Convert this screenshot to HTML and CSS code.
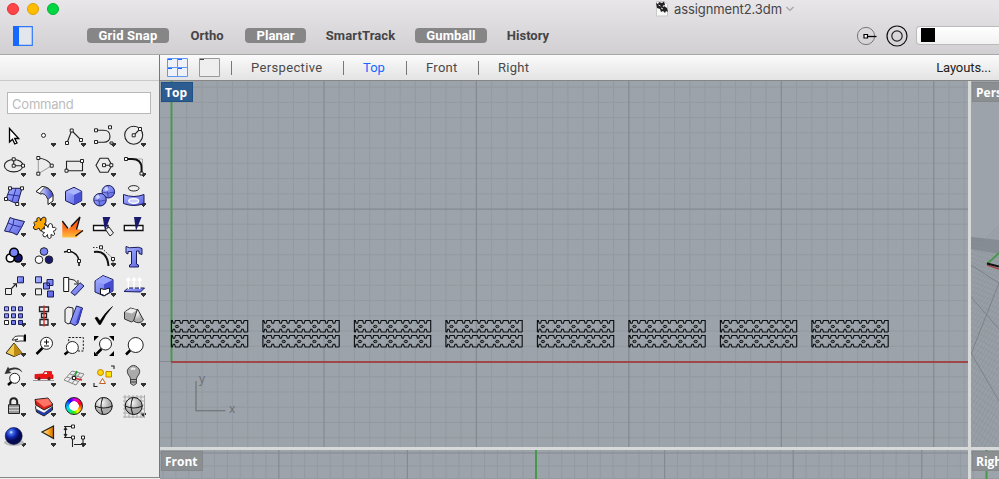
FILE: index.html
```html
<!DOCTYPE html>
<html lang="en">
<head>
<meta charset="utf-8">
<title>assignment2.3dm</title>
<link rel="stylesheet" href="styles.css">
</head>
<body>
<div class="window">
  <header class="titlebar">
    <div class="title-row">
      <div class="lights"><i class="light red"></i><i class="light yellow"></i><i class="light green"></i></div>
      <div class="doc-title">
        <svg width="14" height="18" viewBox="0 0 14 18"><path d="M1.500 1.500h8l3 3v11.500h-11z" fill="#f8f8f8" stroke="#c9c9c9"/><path d="M1 3l2 1 1-2 3 1 2-1.500 1 3-1 1.500 3 2 1 4-2-1-1 2-2-2-2 1-1-3-3-1z" fill="#222"/><path d="M3.500 5l2 1M6 8l2 1M9 5l-1 2" stroke="#ddd"/></svg>
        <span class="doc-name">assignment2.3dm</span>
        <svg width="10" height="8" viewBox="0 0 10 8"><path d="M1.500 2L5 5.500 8.500 2" fill="none" stroke="#a5a3a6" stroke-width="1.2"/></svg>
      </div>
    </div>
    <div class="tool-row">
      <svg class="panel-toggle" width="20" height="20" viewBox="0 0 20 20"><path d="M.7.7h18.6v18.600H.7z" fill="#e4e6ee" stroke="#2f78f6" stroke-width="1.200"/><path d="M0 0h6v20H0z" fill="#1668ff"/></svg>
      <nav class="toggles">
        <span class="toggle on snap">Grid Snap</span><span class="toggle ortho">Ortho</span><span class="toggle on planar">Planar</span><span class="toggle smart">SmartTrack</span><span class="toggle on gumball">Gumball</span><span class="toggle history">History</span>
      </nav>
      <div class="right-tools">
        <svg width="22" height="22" viewBox="0 0 22 22"><circle cx="10" cy="11" r="8.600" fill="none" stroke="#777" stroke-width="1"/><path d="M12 11.500h8.500" stroke="#000" stroke-width="1.300"/><path d="M8 9.500h3.500v3.500H8z" fill="#fff" stroke="#000" stroke-width="1.200"/></svg>
        <svg width="22" height="22" viewBox="0 0 22 22"><circle cx="11" cy="11" r="10" fill="none" stroke="#111" stroke-width="1.200"/><circle cx="11" cy="11" r="5.200" fill="none" stroke="#222" stroke-width="1.200"/></svg>
        <div class="layer-select"><i class="swatch"></i></div>
      </div>
    </div>
  </header>
  <main class="workspace">
    <aside class="sidebar">
      <div class="side-strip"></div>
      <div class="command">Command</div>
      <div class="tools">
<svg class="t m"><path d="M9.500 7.500v13.500l3-2.700 2.300 4.700 2.200-1-2.300-4.500h4z" fill="#fff" stroke="#000" stroke-width="1.300"/></svg>
<svg class="t d"><circle cx="13.500" cy="14.400" r="2" fill="#fff" stroke="#222"/></svg>
<svg class="t d"><path d="M7 22l4.700-12.500L21 19" class="l"/><path class="s" d="M5.500 20.500h3v3h-3zM10.200 8h3v3h-3zM19.500 17.500h3v3h-3z"/></svg>
<svg class="t d"><path d="M6 9.300h7.500q6.500 0 6.500 6t-6.500 6H6" class="l"/><path class="s" d="M4.500 7.800h3v3h-3zM4.500 19.500h3v3h-3zM18.500 4.800h3v3h-3zM20 21h3v2h-3z"/></svg>
<svg class="t d"><circle cx="13.700" cy="14.300" r="9" class="l"/><path class="l" d="M13.700 14.300L20 8"/><path class="s" d="M12.200 12.800h3v3h-3zM18.500 6.500h3v3h-3z"/></svg>

<svg class="t d"><ellipse cx="13.700" cy="14.700" rx="9.300" ry="6.200" class="l"/><path class="l" d="M13.700 8.300v6.400H23"/><path class="s" d="M12.200 6.800h3v3h-3zM12.200 13.200h3v3h-3zM21.500 13.200h3v3h-3z"/></svg>
<svg class="t d"><path d="M8.300 7v15.700l13.400-8" fill="none" stroke="#999"/><path class="l" d="M8.300 7q10 1 13.400 7.700"/><path class="s" d="M6.800 5.500h3v3h-3zM20.200 13.200h3v3h-3zM6.800 21.200h3v3h-3z"/></svg>
<svg class="t d"><path class="l" d="M6.500 10.300h16v9.400h-16z"/><path class="s" d="M5 18.200h3v3H5zM20.500 8.500h3v3h-3z"/></svg>
<svg class="t d"><path class="l" d="M6 14.300l4-7h8l4 7-4 7h-8zM14 14.300h8"/><path class="s" d="M12.500 12.700h3v3h-3zM19.800 12.700h3v3h-3z"/></svg>
<svg class="t d"><path d="M6 8h16.500v15" fill="none" stroke="#aaa"/><path d="M8 8h4q9.500 0 9.500 9v6.500" fill="none" stroke="#111" stroke-width="1.800"/><path class="s" d="M4.500 6.500h3v3h-3zM20 21h3v3h-3z"/></svg>

<svg class="t d"><path class="b" d="M10 7.300h12L17.500 23 6 18z"/><path d="M16 7.500L12 20.500M8 13.500l11.500 1.500" stroke="#2b2f9e" fill="none"/><path class="s" d="M8.500 5.800h3v3h-3zM20.500 5.800h3v3h-3zM4.500 16.500h3v3h-3zM15.700 21.500h3v3h-3z"/></svg>
<svg class="t d"><path d="M6 10.500L12 5.500q8 0 11 8v6.500l-5 3.500v-5Q15 11 10.500 13z" fill="#fff" stroke="#111"/><path d="M9.500 12.500l5-6q6 1 8.500 8l-5 4Q15 11 9.500 12.500z" fill="url(#blue)" stroke="#222" stroke-width=".6"/></svg>
<svg class="t d"><path d="M5.500 10.300L14 6.300l7.700 4v9.400l-7.700 4-8.500-4z" class="b"/><path d="M6.500 10.500L14 7l7 3.500-7 3.200z" fill="#abb5ff"/><path d="M14 14v9.500l7.500-4V10.500z" fill="#4a52d4"/></svg>
<svg class="t d"><circle cx="18.300" cy="10.700" r="6.300" class="b"/><circle cx="10" cy="18.700" r="6.300" class="b"/><path d="M4 19q6 2.500 12 0M10 12.500q-2.500 6 0 12.500M12 11q6 2.500 12.500 0M18.500 4.500q-2.500 6 0 12.500" stroke="#3a409c" stroke-width=".8" fill="none"/><circle cx="8" cy="16" r="2" fill="#cdd4ff"/><circle cx="16.500" cy="8" r="2" fill="#cdd4ff"/></svg>
<svg class="t d"><ellipse cx="13.700" cy="7.300" rx="5.300" ry="2.700" fill="#eee" stroke="#222"/><path d="M3.500 13.500q10.500 4 20.500 0v9q-10 4-20.500 0z" class="b"/><ellipse cx="13.700" cy="20" rx="5" ry="2.300" fill="#c9d1ff" stroke="#fff" stroke-width="1.300"/></svg>

<svg class="t d"><path class="b" d="M10 6.500l4 1.500 10.500 2.500-3 6-4.500 7.500-5-2.500L4.500 20l3-7z"/><path d="M8 12l5 2 8 2M14 8l-1 6-4 7" stroke="#2b2f9e" fill="none"/></svg>
<svg class="t"><path d="M4 11.500q1-2 3-1-1-4 1.500-4t2 3.500q1-4 3.500-4t2 4-2 3q3 0 3 2t-4 2q1 2-1 3t-3-3q-3 3-5 1t1-4q-1-1-1-2.500z" fill="#ffa500" stroke="#222"/><path d="M11.500 19q1-2 3-1-1-3 1-3.500t2.500 2q0-4 2.500-4t2 4q3-1 3.500 1t-3 3q2 1 1.500 3t-3.500 0q1 4-1.500 4t-2-4q-2 4-4 2t1-4q-3 0-3-2.500z" fill="#fff" stroke="#222"/></svg>
<svg class="t"><path d="M2.300 26.500V10L8 18.500 20 6l-3.500 12L23 19.500 16.500 26.500z" fill="url(#fire)"/><path d="M2.300 10L8 17.500M11 15.500L20 6l-3.500 12.500M23 19.500L15.500 25" fill="none" stroke="#111" stroke-width="1.300"/></svg>
<svg class="t"><path d="M3.500 14.500H18v5H3.500z" fill="#fff" stroke="#111" stroke-width="1.300"/><path d="M15.500 18.500l3.500-2.500 4.500 6-3.500 3z" fill="#eee" stroke="#222"/><path d="M12.700 6h7.600L15 20z" fill="#191970"/></svg>
<svg class="t"><path d="M4.300 14.500H23v5H4.300z" fill="#fff" stroke="#111" stroke-width="1.300"/><path d="M14 6h7.500L16 20z" fill="#191970"/></svg>

<svg class="t d"><g stroke="#000" stroke-width="1.600"><circle cx="18" cy="17" r="4" fill="#15156e"/><circle cx="10.300" cy="17" r="4" fill="#fff"/><circle cx="14" cy="11.500" r="4.300" fill="#7783f6"/></g></svg>
<svg class="t"><g stroke="#222"><circle cx="14" cy="10.500" r="3.800" fill="#7783f6"/><circle cx="19" cy="18.700" r="3.800" fill="#191970"/><circle cx="9" cy="18.700" r="3.800" fill="#fff"/></g></svg>
<svg class="t"><path d="M4 11l5-1q9 2 10 10v5" fill="none" stroke="#111" stroke-width="1.600"/><path class="s" d="M7.500 8.500h3v3h-3zM17.500 18.500h3v3h-3z"/></svg>
<svg class="t d"><path d="M4 11q13-2 14.500 14" fill="none" stroke="#111" stroke-width="2"/><path d="M3 6.500h8l12 11v6" fill="none" stroke="#333" stroke-dasharray="1.500 1.500"/><path class="s" d="M9.500 4.800h3v3h-3zM21.500 16.500h3v3h-3z"/></svg>
<svg class="t"><path d="M6 5.500q3 2 8 1t8 1v6l-3-1v-2.500h-2.500V23l2 1v2h-9v-2l2-1V10.500H8V13l-2-1z" class="b"/></svg>

<svg class="t d"><path d="M5.500 17.500h6v6h-6z" fill="#eee" stroke="#222"/><path d="M17.500 5.800h6v6h-6z" class="b"/><path d="M11.500 17.500l5-5m-3.500.3h3.500v3.500" class="l"/></svg>
<svg class="t"><path d="M5.500 5.800h6v6h-6zM17 8.500h6v6h-6zM13.500 12h6v6h-6zM17.500 20h6v6h-6z" class="b"/><path d="M5.500 17.800h6v6h-6z" fill="#eee" stroke="#222"/></svg>
<svg class="t"><path d="M3.700 6.500h5v14h-5z" fill="#fff" stroke="#111"/><path d="M9 8q6 0 8.500 4M18 9v4h-4" fill="none" stroke="#222"/><path class="b" d="M20 11.700l4 3.300-9 9.500-4-3z"/></svg>
<svg class="t d"><path d="M5 10l8-5.500 10 4V20l-9 5-9-4z" class="b"/><path d="M5.500 10l7.500-5 9.500 4-8.500 4z" fill="#9aa5ff"/><path d="M14 13.500l8.500-4.500v11L14 24.500z" fill="#454dd2"/><path d="M10.500 17.500l4 1 5-1.500v4.500l-5 3-4-1.500z" fill="#fff" stroke="#111"/></svg>
<svg class="t d"><path class="b" d="M4 20.500l4-3.500h16.500l-4 4z"/><path d="M8.300 18V8M14 18V8M19.700 18V8M6.300 9.500l2-2.500 2 2.500M12 9.500L14 7l2 2.500M17.700 9.500l2-2.500 2 2.500" fill="none" stroke="#fff" stroke-width="1.400"/></svg>

<svg class="t d"><g class="b"><path d="M4.500 5.800h4v4h-4zM11.500 5.800h4v4h-4zM18.500 5.800h4v4h-4zM4.500 12.800h4v4h-4zM11.500 12.800h4v4h-4zM18.500 12.800h4v4h-4zM11.500 19.500h4v4h-4zM18.500 19.500h4v4h-4z"/></g><path d="M4.500 19.500h4v4h-4z" fill="#fff" stroke="#222"/></svg>
<svg class="t d"><path d="M9.500 6h9v4.500h-9zM11.500 12.500h5v4h-5zM10 18.500h8V24h-8z" fill="#eee" stroke="#222" stroke-width="1.300"/><path d="M14 4.500v21" stroke="#e02020" stroke-width="1.300"/></svg>
<svg class="t d"><path d="M5 8.500l3-2.500 5 1v14l-5 2-3-2z" fill="#eee" stroke="#222"/><path class="b" d="M16.500 5l6 2-4.500 15.500-3 2-5-2.500z"/><path d="M21.500 8l-4.500 14" stroke="#3c43c8" stroke-width="2"/></svg>
<svg class="t d"><path d="M5 17l2-1 3 4Q15 11.500 22.500 5.500 15 14 10.500 23.500H9z" fill="#000" stroke="#000" stroke-width=".6"/></svg>
<svg class="t d"><path d="M4.500 11l6-4 7 2v8l-6 4-7-3z" fill="#aaa" stroke="#333"/><path d="M5 11l6-3.500 6 1.500-5 3.500z" fill="#eee"/><path d="M17.500 8l6 11q-4 5-10 1z" fill="url(#gray)" stroke="#333"/></svg>

<svg class="t d"><path d="M14 12L6 22l8 3.500 8-3.500z" fill="#f2cb48" stroke="#222"/><path d="M14 12v13.500l8-3.500z" fill="#bc8a12"/><path d="M12 9q3-5 6-4h6v5h-4q-4 1-5 0l3-2-4 1z" fill="#fff" stroke="#333"/><path d="M24 3.500h2v7h-2z" fill="#000"/></svg>
<svg class="t"><path d="M6.500 23l6-6" stroke="#000" stroke-width="2.500"/><circle cx="16.500" cy="12.300" r="6" fill="#fff" stroke="#222"/><path d="M16.500 8.500v5M14 11h5M14 15h5" stroke="#111"/></svg>
<svg class="t"><path d="M8.700 6.500h14.600v13.500H8.700z" fill="none" stroke="#111" stroke-dasharray="2 1.500"/><path d="M4.500 23.500l5-4" stroke="#000" stroke-width="2.500"/><circle cx="12.300" cy="16.500" r="6" fill="#fff" stroke="#222"/></svg>
<svg class="t"><path d="M6.500 23l5-5" stroke="#000" stroke-width="2.500"/><circle cx="15.500" cy="13" r="6" fill="#fff" stroke="#222"/><path d="M4 5h5L4 10zM24 5h-5l5 5zM4 25h4l-4-4.500zM24 25h-5l5-5z"/></svg>
<svg class="t"><path d="M6 23.500l5-5" stroke="#000" stroke-width="2.500"/><circle cx="15.700" cy="14" r="7.500" fill="#fff" stroke="#222"/></svg>

<svg class="t d"><path d="M8 24l4-3.500" stroke="#000" stroke-width="2.500"/><circle cx="14.700" cy="17.300" r="5" fill="#fff" stroke="#222"/><path d="M9 10q8-4 13.500 1.500Q20 6 13.500 6.500L9 7.500l-1-2L4.500 13l7-1z" fill="#333"/></svg>
<svg class="t d"><path d="M3 19.500h21" stroke="#999"/><path d="M5 13.500l8-.5 1.500-2.500h7V13l1.500 1v3.500H5z" fill="#ef1616" stroke="#c00" stroke-width=".7"/><path d="M15 11.300h2V13h-3z" fill="#fff"/><circle cx="9" cy="17.700" r="1.600" fill="#622"/><circle cx="19" cy="17.700" r="1.600" fill="#622"/></svg>
<svg class="t d"><path d="M12 10l12 3-8 11L4 19zM9.500 13l12 3.500M7 16l11.500 4.500M16 11L8 20.500M20 12l-8 10.500" fill="none" stroke="#888"/><path d="M14 17l3-7" stroke="#10a030" stroke-width="1.500"/><path d="M14 17l8 2" stroke="#d02020" stroke-width="1.700"/><path class="s" d="M12.500 15.500h3v3h-3z"/></svg>
<svg class="t d"><circle cx="10.500" cy="11.500" r="3" fill="#ffd800" stroke="#c88000"/><path d="M16 10.500h5.500V16H16z" fill="#ffe600" stroke="#c88000"/><path d="M12.500 17.500L9.500 22.500h6z" fill="#fff" stroke="#c06020"/><path d="M21 5h3v3M4 22v3.500h3.500" class="l"/></svg>
<svg class="t d"><path d="M10.500 18q0-2-2-4a6 6 0 1 1 10 0q-2 2-2 4v4.500l-3 2-3-2z" fill="#aaa" stroke="#444"/><path d="M11 18.500h5M11 21h5" stroke="#444"/><path d="M11 8.500q2-2 4 0" stroke="#eee" fill="none" stroke-width="2"/></svg>

<svg class="t d"><path d="M10.300 14v-3q0-3.800 3.400-3.800t3.500 3.800v3" fill="none" stroke="#222" stroke-width="2"/><path d="M8.500 13.700h11v8.800h-11z" fill="#999" stroke="#222"/><path d="M9 16.500h10M9 19.500h10" stroke="#ccc"/></svg>
<svg class="t d"><path d="M5.500 15.500l8.500 4 8.500-4.500v4L14 25l-7.500-4z" fill="#2039b8" stroke="#222"/><path d="M5.500 11.500l8.500 5.500 8.500-4.500v3L14 22l-8-4z" fill="#fff" stroke="#222" stroke-width=".4"/><path d="M5 8.500l13-1.500 4.500 6v1.500L14 19l-8-5z" fill="#d82418" stroke="#222"/><path d="M5.500 9l12.500-1.500 4 5.500-8 3z" fill="#ff7464"/></svg>
<div class="t d wheel-cell"><i class="wheel"></i></div>
<svg class="t"><circle cx="13.700" cy="15" r="8.500" fill="url(#gray)" stroke="#111"/><path d="M5 15q9 4 17.500 0M13 6.500q-4 8 0 17" class="l"/></svg>
<svg class="t d"><path d="M3 6h22M3 10h22M3 14h22M3 18h22M3 22h22M3 26h22M5 4v23M9 4v23M13 4v23M17 4v23M21 4v23M24.500 4v23" stroke="#aaa"/><circle cx="13.700" cy="15" r="8.500" fill="url(#gray)" stroke="#111"/><path d="M5 15q9 4 17.500 0M13 6.500q-4 8 0 17" class="l"/></svg>

<svg class="t d"><ellipse cx="14" cy="21.500" rx="10" ry="3.500" fill="#bbb"/><circle cx="13.700" cy="15" r="8.500" fill="url(#ball)" stroke="#0a104c" stroke-width=".6"/></svg>
<svg class="t d"><path d="M12 11L23.500 5v12.500z" fill="url(#cone)"/><path d="M23.500 17.500L12 11l11.500-6z" fill="none" stroke="#222" stroke-width="1.200"/></svg>
<svg class="t d"><path class="l" d="M4 5.500h9M4 16.500h9M5.500 7.500v7M4 9l1.500-2.500L7 9M4 13l1.500 2.500L7 13M12.500 18v8M23 18v8M14 23.500h7"/><path class="s" d="M11.500 4h3v3h-3zM11.500 15h3v3h-3zM21.500 15h3v3h-3z"/></svg>
      </div>
      <svg class="defs" width="0" height="0"><defs>
        <linearGradient id="blue"><stop stop-color="#dfe4ff"/><stop offset="1" stop-color="#3942d0"/></linearGradient>
        <linearGradient id="bluefill" x2="1" y2="1"><stop stop-color="#aab5ff"/><stop offset="1" stop-color="#5860e4"/></linearGradient>
        <linearGradient id="fire" x2="0" y2="1"><stop stop-color="#ff4a10"/><stop offset=".5" stop-color="#ff6a18"/><stop offset="1" stop-color="#ffc040"/></linearGradient>
        <linearGradient id="cone"><stop stop-color="#fff4d0"/><stop offset=".6" stop-color="#ffa818"/><stop offset="1" stop-color="#c86800"/></linearGradient>
        <radialGradient id="gray" cx=".35" cy=".3"><stop stop-color="#fff"/><stop offset="1" stop-color="#aaa"/></radialGradient>
        <radialGradient id="ball" cx=".35" cy=".28"><stop stop-color="#fff"/><stop offset=".2" stop-color="#4a78ef"/><stop offset=".6" stop-color="#1428b4"/><stop offset="1" stop-color="#060a50"/></radialGradient>
      </defs></svg>
    </aside>
    <section class="content">
      <nav class="tabs">
        <svg class="ic4" width="21" height="19" viewBox="0 0 21 19"><path d="M.5.5h20v18H.5zM10.500.5v18M.5 9.500h20" fill="#eef1f8" stroke="#5f97f5"/><path d="M1 1.500h4M11 1.500h4M1 10.500h4M11 10.500h4" stroke="#1668ff"/></svg>
        <svg class="ic1" width="21" height="19" viewBox="0 0 21 19"><path d="M.5.5h20v18H.5z" fill="#eee" stroke="#999"/><path d="M1 1.500h4" stroke="#444"/></svg>
        <i class="sep"></i><span class="tab persp">Perspective</span><i class="sep"></i><span class="tab top">Top</span><i class="sep"></i><span class="tab front">Front</span><i class="sep"></i><span class="tab right">Right</span><span class="layouts">Layouts...</span>
      </nav>
      <div class="views">
        <div class="view"><svg id="v-top" width="808" height="366"></svg><span class="label active">Top</span></div>
        <div class="view"><svg id="v-persp" width="28" height="366"></svg><span class="label">Perspective</span></div>
        <div class="view"><svg id="v-front" width="808" height="29"></svg><span class="label">Front</span></div>
        <div class="view"><svg id="v-right" width="28" height="29"></svg><span class="label">Right</span></div>
      </div>
    </section>
  </main>
</div>
<script src="views.js"></script>
</body>
</html>
```
FILE: styles.css
```css
* { box-sizing: border-box; }
body { margin: 0; font-family: Roboto, "Liberation Sans", sans-serif; overflow: hidden; }
svg { display: block; flex: none; }
.window { width: 999px; height: 479px; display: flex; flex-direction: column; overflow: hidden; background: #ececec; }
.titlebar { height: 55px; flex: none; background: linear-gradient(#e8e6e8, #d1cfd1); border-bottom: 1px solid #a9a8a9; }
.title-row { height: 18px; display: flex; align-items: center; }
.lights { display: flex; gap: 8px; padding-left: 7px; width: 655px; }
.light { width: 12px; height: 12px; border-radius: 50%; border: 1px solid; }
.red { background: #ff4449; border-color: #df3038; }
.yellow { background: #ffbd00; border-color: #dea000; }
.green { background: #00d742; border-color: #00b536; }
.doc-title { display: flex; align-items: center; gap: 5px; color: #474547; font-family: Inter, sans-serif; font-size: 13px; }
.doc-name { width: 106px; letter-spacing: -.1px; white-space: nowrap; }
.tool-row { height: 35px; display: flex; align-items: center; padding-left: 13px; }
.panel-toggle { position: relative; top: .5px; }
.toggles { display: flex; align-items: center; margin-left: 54px; font-size: 13px; font-weight: 700; color: #464446; }
.toggle { height: 15px; line-height: 15px; text-align: center; border-radius: 4px; white-space: nowrap; }
.on { background: #878687; color: #fff; }
.snap { width: 82px; letter-spacing: .2px; } .ortho { width: 76px; } .planar { width: 61px; } .smart { width: 109px; letter-spacing: .1px; } .gumball { width: 72px; letter-spacing: .1px; } .history { width: 82px; }
.right-tools { display: flex; align-items: center; margin-left: auto; gap: 8px; }
.layer-select { width: 83px; height: 19px; background: linear-gradient(#fff, #f2f2f2); border: 1px solid #bbb; border-right: 0; border-radius: 4px 0 0 4px; padding: 1px 4px; }
.swatch { display: block; width: 14px; height: 14px; background: #000; }
.workspace { display: flex; flex: 1; min-height: 0; }
.sidebar { width: 160px; flex: none; border-right: 1px solid #777; background: #ececec; height: 423px; border-bottom: 1px solid #888; }
.side-strip { height: 26px; background: linear-gradient(#fafafa, #eaeaea); border-bottom: 1px solid #c9c9c9; }
.command { margin: 11px 8px 0 7px; height: 22px; border: 1px solid #b8b8b8; background: #fff; color: #bcbcbc; font: 13px/22px Inter, sans-serif; letter-spacing: -.2px; padding-left: 4px; }
.tools { display: grid; grid-template-columns: repeat(5, 30px); grid-auto-rows: 30px; margin-top: 7px; }
.t { width: 30px; height: 30px; overflow: visible; }
.d { background: linear-gradient(#333, #333) 21px 22px / 5px 2px no-repeat, linear-gradient(#333, #333) 22px 24px / 3px 1px no-repeat, linear-gradient(#333, #333) 23px 25px / 1px 1px no-repeat; }
.l { fill: none; stroke: #222; stroke-width: 1.1; }
.s { fill: #fff; stroke: #222; stroke-width: 1; }
.b { fill: url(#bluefill); stroke: #191c58; stroke-width: 1; }
.wheel-cell { padding: 6px 0 0 5px; }
.wheel { display: block; width: 18px; height: 18px; border-radius: 50%; border: 1px solid #222; background: radial-gradient(circle, #fff 4.500px, transparent 5px), conic-gradient(#c0f, #f08, #f00, #f80, #ff0, #3e0, #0e8, #0df, #08f, #20f, #c0f); }
.content { flex: 1; min-width: 0; }
.tabs { height: 26px; display: flex; align-items: center; background: linear-gradient(#fbfbfb, #e3e3e3); border-bottom: 1px solid #868686; padding-left: 7px; font: 13px Roboto, sans-serif; color: #4a4a4a; }
.ic1 { margin-left: 11px; }
.sep { width: 1px; height: 14px; background: #777; margin-left: 11px; }
.tab { white-space: nowrap; }
.persp { margin-left: 19px; width: 81px; letter-spacing: .35px; }
.top { color: #1668ff; margin-left: 19px; width: 32px; }
.front { margin-left: 19px; width: 41px; letter-spacing: .3px; }
.right { margin-left: 19px; letter-spacing: .3px; }
.layouts { margin-left: auto; padding-right: 8px; color: #222; letter-spacing: -.1px; }
.views { display: grid; grid-template: 366px 29px / 808px 28px; gap: 3px; background: #d8d9d9; }
.view { position: relative; overflow: hidden; background: #9ca3aa; }
.label { position: absolute; left: 1px; top: 1px; height: 20px; padding: 0 4px 0 3px; border: 1px solid #84888b; background: #8b8f92; color: #fff; font: 700 12px/19px "Open Sans", sans-serif; }
.label.active { background: #2d5d90; border-color: #1f5186; padding-right: 5px; }
```
FILE: views.js
```js
// Each view is drawn in its own pixel space, minor lines under major ones.
function line(x1, y1, x2, y2, color, width) {
  return `<path d="M${x1} ${y1}L${x2} ${y2}" stroke="${color}" stroke-width="${width || 1}"/>`;
}
function grid(w, h, ox, oy, step) {
  let minor = '', major = '';
  for (let i = -60; i < 70; i++) {
    const x = ox + i * step, y = oy + i * step, m = i % 10 === 0;
    let s = '';
    if (x > 0 && x < w) s += line(x, 0, x, h, m ? '#858a91' : '#939aa1', m ? 1.2 : 1);
    if (y > 0 && y < h) s += line(0, y, w, y, m ? '#858a91' : '#939aa1', m ? 1.2 : 1);
    if (m) major += s; else minor += s;
  }
  return minor + major;
}
function strip(x, y) {
  let top = `M${x} ${y + .5}`, bottom = `M${x} ${y + 12}`, holes = '';
  for (let i = 0; i < 5; i++) {
    top += 'h1.200l.8 2.800h1.400l.8-2.800h4.300l.8 2.800h1.600l.8-2.800h3.600';
    bottom += 'h1.200l.8-2.800h1.400l.8 2.800h4.300l.8-2.800h1.600l.8 2.800h3.600';
    const cx = x + 5.8 + i * 15.3;
    holes += `<ellipse cx="${cx}" cy="${y + 6.500}" rx="1.700" ry="1.200" fill="#74797e" stroke="#111"/>`;
  }
  return `<path d="${top}V${y + 12}${bottom}M${x + .2} ${y}v12" fill="none" stroke="#0c0f11" stroke-width="1.1"/>${holes}`;
}
let s = grid(808, 366, 11.5, 280.5, 15.245);
s += line(11.5, 0, 11.5, 281, '#449a47', 1.8) + line(11, 281, 808, 281, '#a04848', 1.8);
for (let i = 0; i < 8; i++) s += strip(11.2 + i * 91.5, 239) + strip(11.2 + i * 91.5, 254);
s += line(36, 300, 36, 330, '#777a7f', 1.4) + line(35.500, 329.700, 65.500, 329.700, '#777a7f', 1.4);
s += '<g fill="#6b6e73" font-family="Open Sans" font-size="12"><text x="39" y="302">y</text><text x="69" y="332">x</text></g>';
document.getElementById('v-top').innerHTML = s;

document.getElementById('v-front').innerHTML = grid(808, 29, 376, -35.600 - 90, 12.86) + line(376, 0, 376, 29, '#449a47', 2);

let p = '<path d="M0 156l28 3v207H0z" fill="#989fa6"/><path d="M0 156l28 3v14L0 168z" fill="#858b92"/>';
for (let i = 0; i < 50; i++) {
  const y = 160 + i * 4 + i * i * .05;
  p += line(0, y, 28, y + 8 + i * .4, '#8b9299', .5);
  p += line(0, y + 14, 28, y - 16 - i * .6, '#8b9299', .5);
}
p += line(0, 216, 28, 248, '#7e838a') + line(0, 272, 28, 320, '#7e838a') + line(0, 273, 28, 202, '#7e838a') + line(0, 184, 28, 202, '#7e838a');
p += line(16, 183, 28, 172, '#449a47', 1.8) + line(16, 184, 28, 188, '#a04848', 1.5) + line(16, 182.5, 28, 185.500, '#111', 2);
document.getElementById('v-persp').innerHTML = p;
document.getElementById('v-right').innerHTML = grid(28, 29, 15.5, -125.6, 12.86) + line(15.5, 0, 15.5, 29, '#449a47', 2);
```
